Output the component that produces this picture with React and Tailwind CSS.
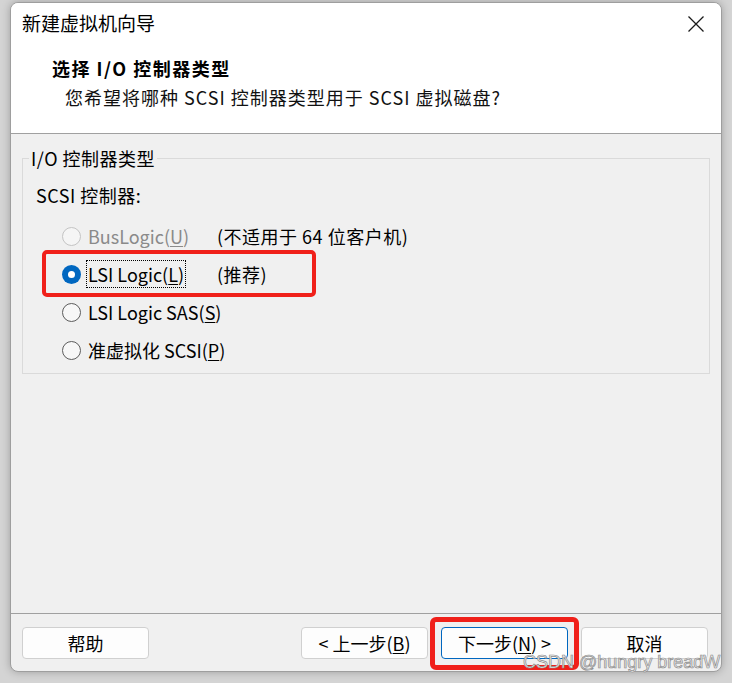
const font = 'font-["Noto_Sans_CJK_SC",sans-serif]';

function Radio({ state }) {
  if (state === 'checked') {
    return (
      <span className="flex h-[19px] w-[19px] shrink-0 items-center justify-center rounded-full bg-[#0067c0]">
        <span className="h-[7px] w-[7px] rounded-full bg-white" />
      </span>
    );
  }
  if (state === 'disabled') {
    return <span className="h-[19px] w-[19px] shrink-0 rounded-full border border-[#c4c4c4] bg-[#f5f5f5]" />;
  }
  return <span className="h-[19px] w-[19px] shrink-0 rounded-full border border-[#5c5c5c] bg-[#f7f7f7]" />;
}

function Option({ state, label, hot, note, focus }) {
  const disabled = state === 'disabled';
  return (
    <div className="flex h-[38px] items-center whitespace-nowrap pl-[39px]">
      <Radio state={state} />
      <div className="ml-[5px] min-w-[131px]">
        <span
          className={
            (focus ? 'border border-dotted border-black px-[1px] ' : 'border border-transparent px-[1px] ') +
            (disabled ? 'text-[#8a8a8a]' : 'text-black')
          }
        >
          {label}(<span className="underline underline-offset-2">{hot}</span>)
        </span>
      </div>
      {note ? <span className="tracking-[0.5px] text-black">{note}</span> : null}
    </div>
  );
}

function Button({ children, primary }) {
  return (
    <button
      className={
        'h-[32px] w-[127px] whitespace-nowrap rounded-[4px] bg-[#fdfdfd] text-[18px] leading-[30px] text-black ' +
        (primary ? 'border border-[#0067c0]' : 'border border-[#d0d0d0]')
      }
    >
      {children}
    </button>
  );
}

export default function App() {
  return (
    <div className={'relative h-[683px] w-[732px] overflow-hidden bg-[#d4d4d4] pl-[10px] pt-[2px] ' + font}>
      <div className="relative flex h-[670px] w-[712px] flex-col overflow-hidden rounded-[8px] border border-[#9e9e9e] bg-[#f0f0f0] text-[18px] shadow-[0_0_8px_rgba(0,0,0,0.25)]">
        <div className="h-[131px] border-b border-[#a0a0a0] bg-white">
          <div className="flex h-[40px] items-center justify-between pl-[11px] pr-[16px]">
            <span className="text-[19px] leading-[24px] text-black">新建虚拟机向导</span>
            <svg width="18" height="18" viewBox="0 0 18 18" className="mt-[1px]">
              <path d="M1.5 1.5 L16.5 16.5 M16.5 1.5 L1.5 16.5" stroke="#1a1a1a" strokeWidth="1.3" fill="none" />
            </svg>
          </div>
          <div className="mt-[11px] pl-[41px] font-bold leading-[28px] tracking-[1.5px] text-black">选择 I/O 控制器类型</div>
          <div className="mt-[1px] whitespace-nowrap pl-[54px] leading-[28px] tracking-[1px] text-[#111]">
            您希望将哪种 SCSI 控制器类型用于 SCSI 虚拟磁盘?
          </div>
        </div>

        <div className="flex-1 px-[11px] pt-[12px]">
          <fieldset className="h-[228px] border border-[#dadada] pb-[4px]">
            <legend className="ml-[6px] px-[2px] leading-[24px] tracking-[0.5px] text-black">I/O 控制器类型</legend>
            <div className="mt-[13px] pl-[13px] leading-[24px] tracking-[0.5px] text-black">SCSI 控制器:</div>
            <div className="mt-[10px] leading-[24px]">
              <Option state="disabled" label="BusLogic" hot="U" note="(不适用于 64 位客户机)" />
              <Option state="checked" label="LSI Logic" hot="L" note="(推荐)" focus />
              <Option state="off" label="LSI Logic SAS" hot="S" />
              <Option state="off" label="准虚拟化 SCSI" hot="P" />
            </div>
          </fieldset>
        </div>

        <div className="flex h-[58px] items-start border-t border-[#a0a0a0] px-[11px] pt-[13px]">
          <Button>帮助</Button>
          <div className="ml-auto flex gap-[13px] pr-[2px]">
            <Button>
              &lt; 上一步(<span className="underline underline-offset-2">B</span>)
            </Button>
            <Button primary>
              下一步(<span className="underline underline-offset-2">N</span>) &gt;
            </Button>
            <Button>取消</Button>
          </div>
        </div>

        <div className="pointer-events-none absolute left-[31px] top-[247px] h-[47px] w-[274px] rounded-[5px] border-[4px] border-[#f0201a]" />
        <div className="pointer-events-none absolute left-[419px] top-[614px] h-[53px] w-[149px] rounded-[6px] border-[5px] border-[#f0201a]" />
      </div>
      <div className="pointer-events-none absolute left-[523px] top-[652px] whitespace-nowrap font-['Liberation_Sans',sans-serif] text-[18px] leading-[20px] text-[#eeeeee] [-webkit-text-stroke:0.7px_#8c8c8c]">
        CSDN @hungry breadW
      </div>
    </div>
  );
}
